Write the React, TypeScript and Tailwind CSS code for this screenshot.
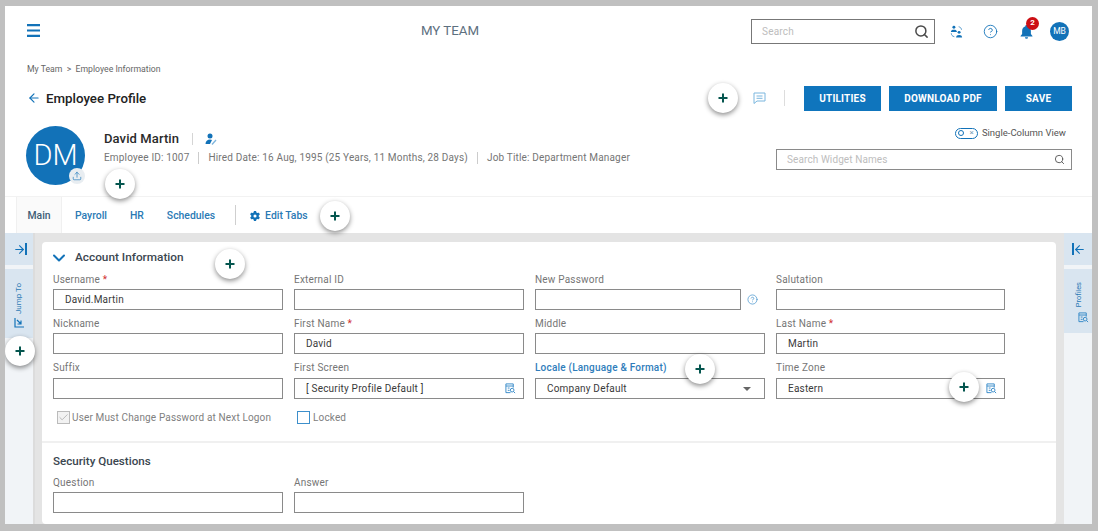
import React from "react";
import { Search, CircleHelp, ArrowLeft, ArrowRight, ChevronDown, Check, Upload } from "lucide-react";
import { FaGear } from "react-icons/fa6";

const Plus = ({ className }: { className: string }) => (
  <div className={`absolute z-10 flex h-[30px] w-[30px] items-center justify-center rounded-full bg-white shadow-[0_2px_5px_rgba(0,0,0,0.45)] ${className}`}>
    <svg width="10" height="10" viewBox="0 0 10 10"><path d="M5 0.5v9M0.5 5h9" stroke="#05564f" strokeWidth="2" /></svg>
  </div>
);

const LookupIcon = () => (
  <svg width="11" height="11" viewBox="0 0 12 12" fill="none" stroke="#2f86c6" strokeWidth="1" className="-mr-[4px]">
    <path d="M6 10.500H1V1h8v4" />
    <path d="M1 3.300h8M3 5.500h2M3 8h2" />
    <circle cx="7.800" cy="7.800" r="2" />
    <path d="M9.300 9.300l1.700 1.700" />
  </svg>
);

const Input = ({ value, children, className = "w-full" }: { value?: string; children?: React.ReactNode; className?: string }) => (
  <div className={`flex h-[21px] items-center justify-between border border-[#8a8a8a] bg-white pl-[11px] pr-[11px] text-[10px] tracking-[0.2px] text-[#3a3a3a] ${className}`}>
    <span>{value}</span>
    {children}
  </div>
);

const Label = ({ children, req, low }: { children: React.ReactNode; req?: boolean; low?: boolean }) => (
  <div className={`${low ? "h-[18px]" : "h-[17px]"} pt-[1px] text-[10px] leading-[14px] tracking-[0.2px] text-[#757575]`}>
    {children}
    {req && <span className="text-[#d03030]"> *</span>}
  </div>
);

const Field = ({ label, value, req, low, narrow, children }: { label: React.ReactNode; value?: string; req?: boolean; low?: boolean; narrow?: boolean; children?: React.ReactNode }) => (
  <div className={`h-[44px] ${narrow ? "w-[229px]" : "w-[230px]"}`}>
    <Label req={req} low={low}>{label}</Label>
    <Input value={value}>{children}</Input>
  </div>
);

export default function App() {
  return (
    <div className="flex h-[531px] w-[1098px] bg-[#c0c0c0] pb-[7px] pl-[5px] pr-[6px] pt-[6px] font-['Roboto',sans-serif]">
      <div className="relative flex min-w-0 flex-1 flex-col overflow-hidden bg-white">
        {/* Top bar */}
        <header className="relative flex h-[50px] shrink-0 items-center pl-[22px] pr-[23px]">
          <svg width="14" height="13" viewBox="0 0 14 13" className="-mt-[1px]"><path d="M0 1.200h13M0 6.500h13M0 11.800h13" stroke="#1272b8" strokeWidth="2.200" /></svg>
          <div className="flex-1 pl-[108px] text-center text-[13.300px] text-[#5d7080]">MY TEAM</div>
          <div className="flex h-[25px] w-[184px] items-center justify-between border border-[#777] pl-[10px] pr-[5px] text-[10px] tracking-[0.2px] text-[#bdbdbd]">
            <span className="pt-[1px]">Search</span>
            <Search size={15} strokeWidth={2.400} color="#4a4a4a" />
          </div>
          <svg width="13" height="15" viewBox="0 0 15 16" className="ml-[15px]" fill="#1272b8">
            <circle cx="4.500" cy="3" r="1.700" />
            <path d="M1 8.500c0-2 1.500-2.600 3.500-2.600S8 6.500 8 8.500z" />
            <circle cx="10.500" cy="9" r="1.700" />
            <path d="M7 15c0-2.200 1.500-3 3.500-3s3.500.8 3.500 3z" />
            <path d="M1.500 10c0 2 1 3.500 3.500 4M10 2.500c2 .5 3 1.500 3.300 3.500" fill="none" stroke="#1272b8" strokeWidth="0.800" />
          </svg>
          <CircleHelp size={15} strokeWidth={1.400} color="#1272b8" className="ml-[20px]" />
          <div className="relative ml-[21px] h-[15px] w-[15px]">
            <svg width="15" height="15" viewBox="0 0 24 24" fill="#1272b8"><path d="M12 1.500a2 2 0 0 0-2 2v.6C7 5 5 7.600 5 11v5l-2.500 3v1h19v-1L19 16v-5c0-3.400-2-6-5-6.900v-.6a2 2 0 0 0-2-2zM9.500 21a2.500 2.500 0 0 0 5 0z" /></svg>
            <div className="absolute -right-[5px] -top-[7px] flex h-[13px] w-[13px] items-center justify-center rounded-full bg-[#cc0f14] text-[8px] font-bold text-white">2</div>
          </div>
          <div className="ml-[16px] flex h-[19px] w-[19px] items-center justify-center rounded-full bg-[#1272b8] text-[8.500px] text-white">MB</div>
        </header>

        {/* Breadcrumb + title */}
        <div className="h-[24px] shrink-0 pl-[22px] pt-[5px] text-[8.700px] leading-[16px] text-[#666]">My Team &nbsp;&gt;&nbsp; Employee Information</div>
        <div className="flex h-[36px] shrink-0 items-center pl-[22px] pr-[20px]">
          <ArrowLeft size={14} strokeWidth={2} color="#1272b8" />
          <div className="ml-[5px] flex-1 pt-[1px] text-[13.300px] font-medium text-[#222]">Employee Profile</div>
          <svg width="13" height="12" viewBox="0 0 13 12" fill="none" stroke="#7ab6de" strokeWidth="1" className="-mt-[1px]">
            <path d="M1 1h11v8H4l-3 2.500zM3.500 4h6M3.500 6.300h6" />
          </svg>
          <div className="ml-[18px] mr-[19px] h-[16px] w-px bg-[#ddd]" />
          <button className="h-[25px] w-[77px] bg-[#0f75bd] pt-[1px] text-[10px] font-bold tracking-[0.2px] text-white">UTILITIES</button>
          <button className="ml-[8px] h-[25px] w-[108px] bg-[#0f75bd] pt-[1px] text-[10px] font-bold tracking-[0.2px] text-white">DOWNLOAD PDF</button>
          <button className="ml-[8px] h-[25px] w-[67px] bg-[#0f75bd] pt-[1px] text-[10px] font-bold tracking-[0.2px] text-white">SAVE</button>
        </div>

        {/* Profile row */}
        <div className="flex h-[81px] shrink-0 border-b border-[#f2f2f2] pl-[21px] pr-[20px]">
          <div className="relative mt-[10px] flex h-[59px] w-[59px] shrink-0 items-center justify-center rounded-full bg-[#1272b8] text-[29px] font-light text-white">
            DM
            <div className="absolute bottom-[1px] right-0 flex h-[16px] w-[16px] items-center justify-center rounded-full bg-[#e8edf1]">
              <Upload size={10} strokeWidth={1.500} color="#1272b8" />
            </div>
          </div>
          <div className="ml-[19px] flex-1">
            <div className="mt-[15px] flex h-[16px] items-center text-[13px] font-medium tracking-[0.1px] text-[#2a2a2a]">
              David Martin
              <span className="ml-[13px] h-[12px] w-px bg-[#d5d5d5]" />
              <svg width="12" height="12" viewBox="0 0 12 12" className="ml-[12px]" fill="#1272b8">
                <circle cx="5" cy="3" r="2.500" />
                <path d="M0.500 11c0-3 2-4.500 4.500-4.500 .8 0 1.500.2 2 .5L5 11z" />
                <path d="M6.500 11l4-4.500 1 1-4 4.500z" fill="#7db5dd" />
              </svg>
            </div>
            <div className="mt-[4px] flex items-center text-[10px] leading-[14px] tracking-[0.17px] text-[#757575]">
              <span>Employee ID: 1007</span>
              <span className="mx-[9px] h-[12px] w-px bg-[#ccc]" />
              <span>Hired Date: 16 Aug, 1995 (25 Years, 11 Months, 28 Days)</span>
              <span className="mx-[9px] h-[12px] w-px bg-[#ccc]" />
              <span>Job Title: Department Manager</span>
            </div>
          </div>
          <div className="flex w-[296px] shrink-0 flex-col items-end">
            <div className="mt-[10px] flex h-[14px] items-center pr-[6px] text-[9.500px] text-[#555]">
              <div className="mr-[4px] flex h-[11px] w-[23px] items-center justify-between rounded-full border border-[#1272b8] pl-[2px] pr-[3px]">
                <span className="h-[6px] w-[6px] rounded-full border border-[#1272b8]" />
                <span className="text-[8px] leading-none text-[#7a9db8]">×</span>
              </div>
              Single-Column View
            </div>
            <div className="mt-[9px] flex h-[21px] w-[296px] items-center justify-between border border-[#8a8a8a] pl-[10px] pr-[6px] text-[10px] tracking-[0.1px] text-[#bdbdbd]">
              <span>Search Widget Names</span>
              <Search size={11} strokeWidth={2} color="#555" />
            </div>
          </div>
        </div>

        {/* Tabs */}
        <nav className="flex h-[36px] shrink-0 items-stretch pl-[11px] text-[10.400px] font-medium text-[#2b7ab5]">
          <div className="flex w-[46px] items-center justify-center border-x border-[#f0f0f0] bg-[#fafafa] pt-[1px] text-[#3f5d75]">Main</div>
          <div className="ml-[13px] flex items-center pt-[1px]">Payroll</div>
          <div className="ml-[23px] flex items-center pt-[1px]">HR</div>
          <div className="ml-[23px] flex items-center pt-[1px]">Schedules</div>
          <div className="my-[8px] ml-[20px] w-px bg-[#cfcfcf]" />
          <div className="ml-[14px] flex items-center gap-[5px] pt-[1px]"><FaGear size={10} color="#1272b8" />Edit Tabs</div>
        </nav>

        {/* Body */}
        <div className="flex min-h-0 flex-1 bg-[#e4e4e4]">
          <aside className="w-[30px] shrink-0 border-r-2 border-[#dcdcdc] bg-[#f1f4f7]">
            <div className="flex h-[32px] items-center justify-center bg-[#d9e5f0] pl-[1px]">
              <ArrowRight size={13} strokeWidth={2} color="#1272b8" className="-mr-[1px]" />
              <span className="h-[12px] w-[2px] bg-[#1272b8]" />
            </div>
            <div className="mt-[4px] flex h-[69px] flex-col items-center bg-[#d9e5f0] pt-[14px]">
              <span className="rotate-180 text-[8px] leading-[10px] text-[#2b7ab5] [writing-mode:vertical-rl]">Jump To</span>
              <svg width="11" height="11" viewBox="0 0 11 11" className="mt-[3px]" fill="none" stroke="#1272b8" strokeWidth="1.200"><path d="M1 1v9h9M3 3l4 4M7 3.500V7H3.500" /></svg>
            </div>
          </aside>
          <main className="ml-[7px] mr-[8px] mt-[9px] min-w-0 flex-1 rounded-[4px] bg-white">
            <div className="h-[199px] pl-[11px]">
              <div className="flex h-[30px] items-center pt-[1px]">
                <ChevronDown size={20} strokeWidth={2.400} color="#1272b8" className="-ml-[4px]" />
                <span className="ml-[6px] text-[11.800px] font-medium text-[#3b4650]">Account Information</span>
              </div>
              <div className="grid grid-cols-[230px_230px_230px_230px] gap-x-[11px]">
                <Field label="Username" req value="David.Martin" />
                <Field label="External ID" />
                <div className="relative h-[44px] w-[230px]">
                  <Label>New Password</Label>
                  <Input className="w-[206px]" />
                  <CircleHelp size={11} strokeWidth={1.500} color="#3d8fcb" className="absolute left-[212px] top-[22px]" />
                </div>
                <Field label="Salutation" narrow />
                <Field label="Nickname" />
                <Field label="First Name" req value="David" />
                <Field label="Middle" />
                <Field label="Last Name" req value="Martin" narrow />
                <Field label="Suffix" low />
                <Field label="First Screen" value="[ Security Profile Default ]" low><LookupIcon /></Field>
                <Field label={<span className="font-medium text-[#2f7dbb]">Locale (Language &amp; Format)</span>} value="Company Default" low>
                  <span className="mr-[2px] h-0 w-0 border-x-[4px] border-t-[4px] border-x-transparent border-t-[#666]" />
                </Field>
                <Field label="Time Zone" value="Eastern" low narrow><LookupIcon /></Field>
              </div>
              <div className="mt-[6px] flex h-[14px] text-[10px] tracking-[0.15px] text-[#808080]">
                <div className="flex w-[241px] items-center pl-[4px]">
                  <span className="flex h-[13px] w-[13px] items-center justify-center border border-[#bbb] bg-[#f2f2f2]"><Check size={11} strokeWidth={1.400} color="#999" /></span>
                  <span className="ml-[2px]">User Must Change Password at Next Logon</span>
                </div>
                <div className="flex items-center pl-[3px]">
                  <span className="h-[13px] w-[13px] border border-[#3d8fcb] bg-white" />
                  <span className="ml-[3px]">Locked</span>
                </div>
              </div>
            </div>
            <div className="h-[2px] bg-[#f0f0f0]" />
            <div className="pl-[11px]">
              <div className="mt-[10px] text-[11.600px] font-medium leading-[16px] text-[#3b4650]">Security Questions</div>
              <div className="mt-[6px] flex gap-x-[11px]">
                <Field label="Question" />
                <Field label="Answer" />
              </div>
            </div>
          </main>
          <aside className="w-[28px] shrink-0 bg-[#f1f4f7]">
            <div className="flex h-[32px] items-center justify-center bg-[#d9e5f0] pl-[2px]">
              <span className="h-[12px] w-[2px] bg-[#1272b8]" />
              <ArrowLeft size={13} strokeWidth={2} color="#1272b8" className="-ml-[1px]" />
            </div>
            <div className="mt-[4px] flex h-[64px] flex-col items-center bg-[#d9e5f0] pl-[2px] pt-[13px]">
              <span className="rotate-180 text-[7.500px] leading-[10px] text-[#2b7ab5] [writing-mode:vertical-rl]">Profiles</span>
              <span className="ml-[4px] mt-[5px] flex"><LookupIcon /></span>
            </div>
          </aside>
        </div>

        {/* Floating add buttons */}
        <Plus className="left-[703px] top-[77px]" />
        <Plus className="left-[100px] top-[163px]" />
        <Plus className="left-[315px] top-[195px]" />
        <Plus className="left-[210px] top-[243px]" />
        <Plus className="left-0 top-[330px]" />
        <Plus className="left-[680px] top-[348px]" />
        <Plus className="left-[944px] top-[366px]" />
      </div>
    </div>
  );
}
